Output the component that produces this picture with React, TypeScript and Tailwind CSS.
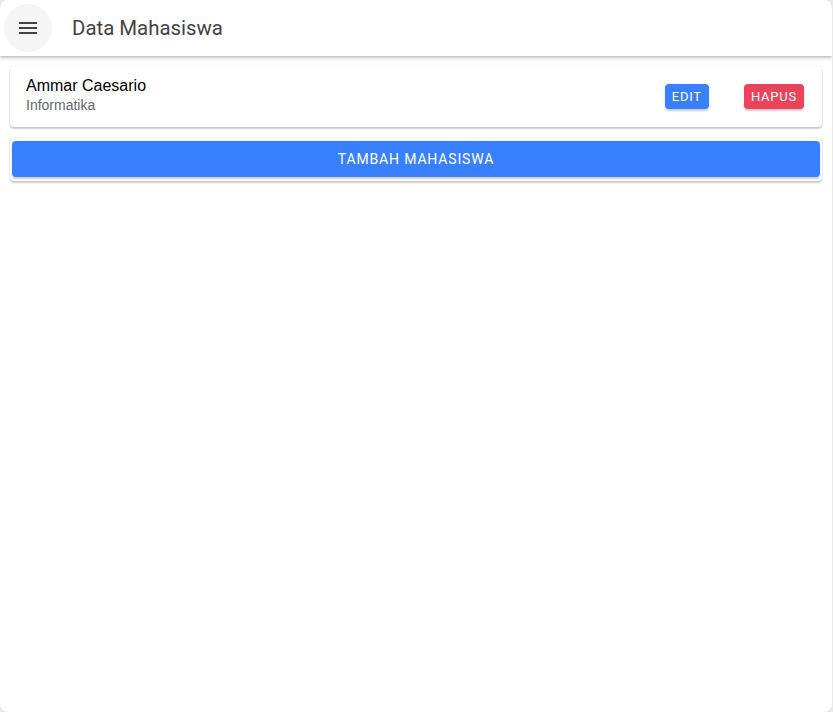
export default function App() {
	return (
		<div className="h-[712px] w-[833px] bg-[#e9e9e9] font-['Roboto',sans-serif]">
			<div className="flex h-full w-[832px] flex-col overflow-hidden rounded-lg bg-white">
				{/* Toolbar */}
				<header className="flex h-14 shrink-0 items-center bg-white shadow-[0_2px_4px_rgba(0,0,0,0.2),0_1px_2px_rgba(0,0,0,0.1)]">
					<button
						type="button"
						aria-label="Menu"
						className="ml-1 flex h-12 w-12 items-center justify-center rounded-full bg-[#f5f5f5] text-[#424242]"
					>
						<svg viewBox="0 0 24 24" width="24" height="24" fill="currentColor">
							<path d="M3 18h18v-2H3v2zm0-5h18v-2H3v2zm0-7v2h18V6H3z" />
						</svg>
					</button>
					<h1 className="ml-5 text-[20.4px] font-normal text-[#424242]">Data Mahasiswa</h1>
				</header>

				<main className="flex flex-col gap-[11px] px-[10px] pt-[10px]">
					{/* Student card */}
					<div className="flex h-[61px] items-center rounded bg-white pl-4 pr-[18px] shadow-[0_2px_2px_rgba(0,0,0,0.2),0_0_2px_rgba(0,0,0,0.12)]">
						<div className="mb-1 flex-1 font-['Liberation_Sans',sans-serif]">
							<div className="text-[16px] leading-5 text-black">Ammar Caesario</div>
							<div className="text-[14px] leading-[18px] text-[#666]">Informatika</div>
						</div>
						<button
							type="button"
							className="h-[25px] rounded bg-[#3880ff] px-[7px] text-[13px] uppercase tracking-[0.06em] text-white shadow-[0_2px_2px_rgba(0,0,0,0.2)]"
						>
							Edit
						</button>
						<button
							type="button"
							className="ml-[35px] h-[25px] rounded bg-[#eb445a] px-[7px] text-[13px] uppercase tracking-[0.06em] text-white shadow-[0_2px_2px_rgba(0,0,0,0.2)]"
						>
							Hapus
						</button>
					</div>

					{/* Add button */}
					<div className="rounded bg-white p-[2px] pb-1 pt-[3px] shadow-[0_2px_2px_rgba(0,0,0,0.2),0_0_2px_rgba(0,0,0,0.12)]">
						<button
							type="button"
							className="h-9 w-full rounded bg-[#3880ff] text-[14px] uppercase tracking-[0.06em] text-white shadow-[0_2px_2px_rgba(0,0,0,0.2)]"
						>
							Tambah Mahasiswa
						</button>
					</div>
				</main>
			</div>
		</div>
	);
}
